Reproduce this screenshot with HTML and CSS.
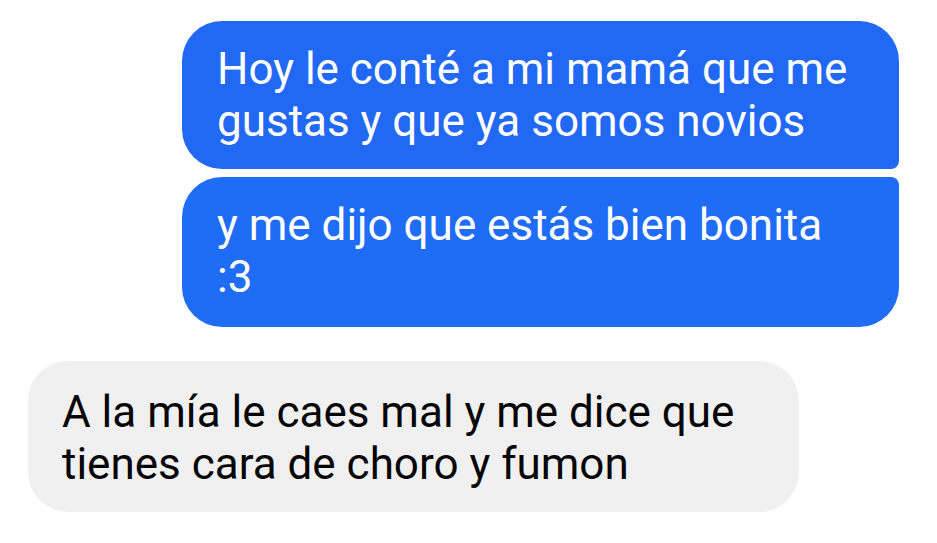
FILE: index.html
```html
<!DOCTYPE html>
<html lang="es">
<head>
<meta charset="utf-8">
<title>Chat</title>
<link rel="stylesheet" href="styles.css">
</head>
<body>
<div class="chat">
  <div class="group group-out">
    <div class="bubble out first">Hoy le conté a mi mamá que me gustas y que ya somos novios</div>
    <div class="bubble out last">y me dijo que estás bien bonita :3</div>
  </div>
  <div class="group group-in">
    <div class="bubble in">A la mía le caes mal y me dice que tienes cara de choro y fumon</div>
  </div>
</div>
</body>
</html>
```
FILE: styles.css
```css
html, body {
  margin: 0;
  padding: 0;
  background: #ffffff;
}
body {
  width: 937px;
  height: 543px;
  overflow: hidden;
  font-family: Roboto, "Noto Sans", sans-serif;
}
.chat {
  display: flex;
  flex-direction: column;
  gap: 34px;
  padding: 21px 38px 0 28px;
}
.group {
  display: flex;
  flex-direction: column;
  gap: 8px;
}
.group-out {
  align-items: flex-end;
}
.group-in {
  align-items: flex-start;
}
.bubble {
  box-sizing: border-box;
  font-size: 44px;
  line-height: 52px;
  letter-spacing: 0;
}
.out {
  width: 717px;
  background: #2168f5;
  color: #ffffff;
  padding: 22px 45px 22px 35px;
}
.out.first {
  border-radius: 40px 40px 8px 40px;
}
.out.last {
  border-radius: 40px 8px 40px 40px;
  padding-top: 22px;
  padding-bottom: 24px;
  background: #1f6cf6;
}
.in {
  width: 771px;
  background: #f0f0f0;
  color: #050505;
  padding: 25px 45px 22px 34px;
  border-radius: 40px;
}
```
